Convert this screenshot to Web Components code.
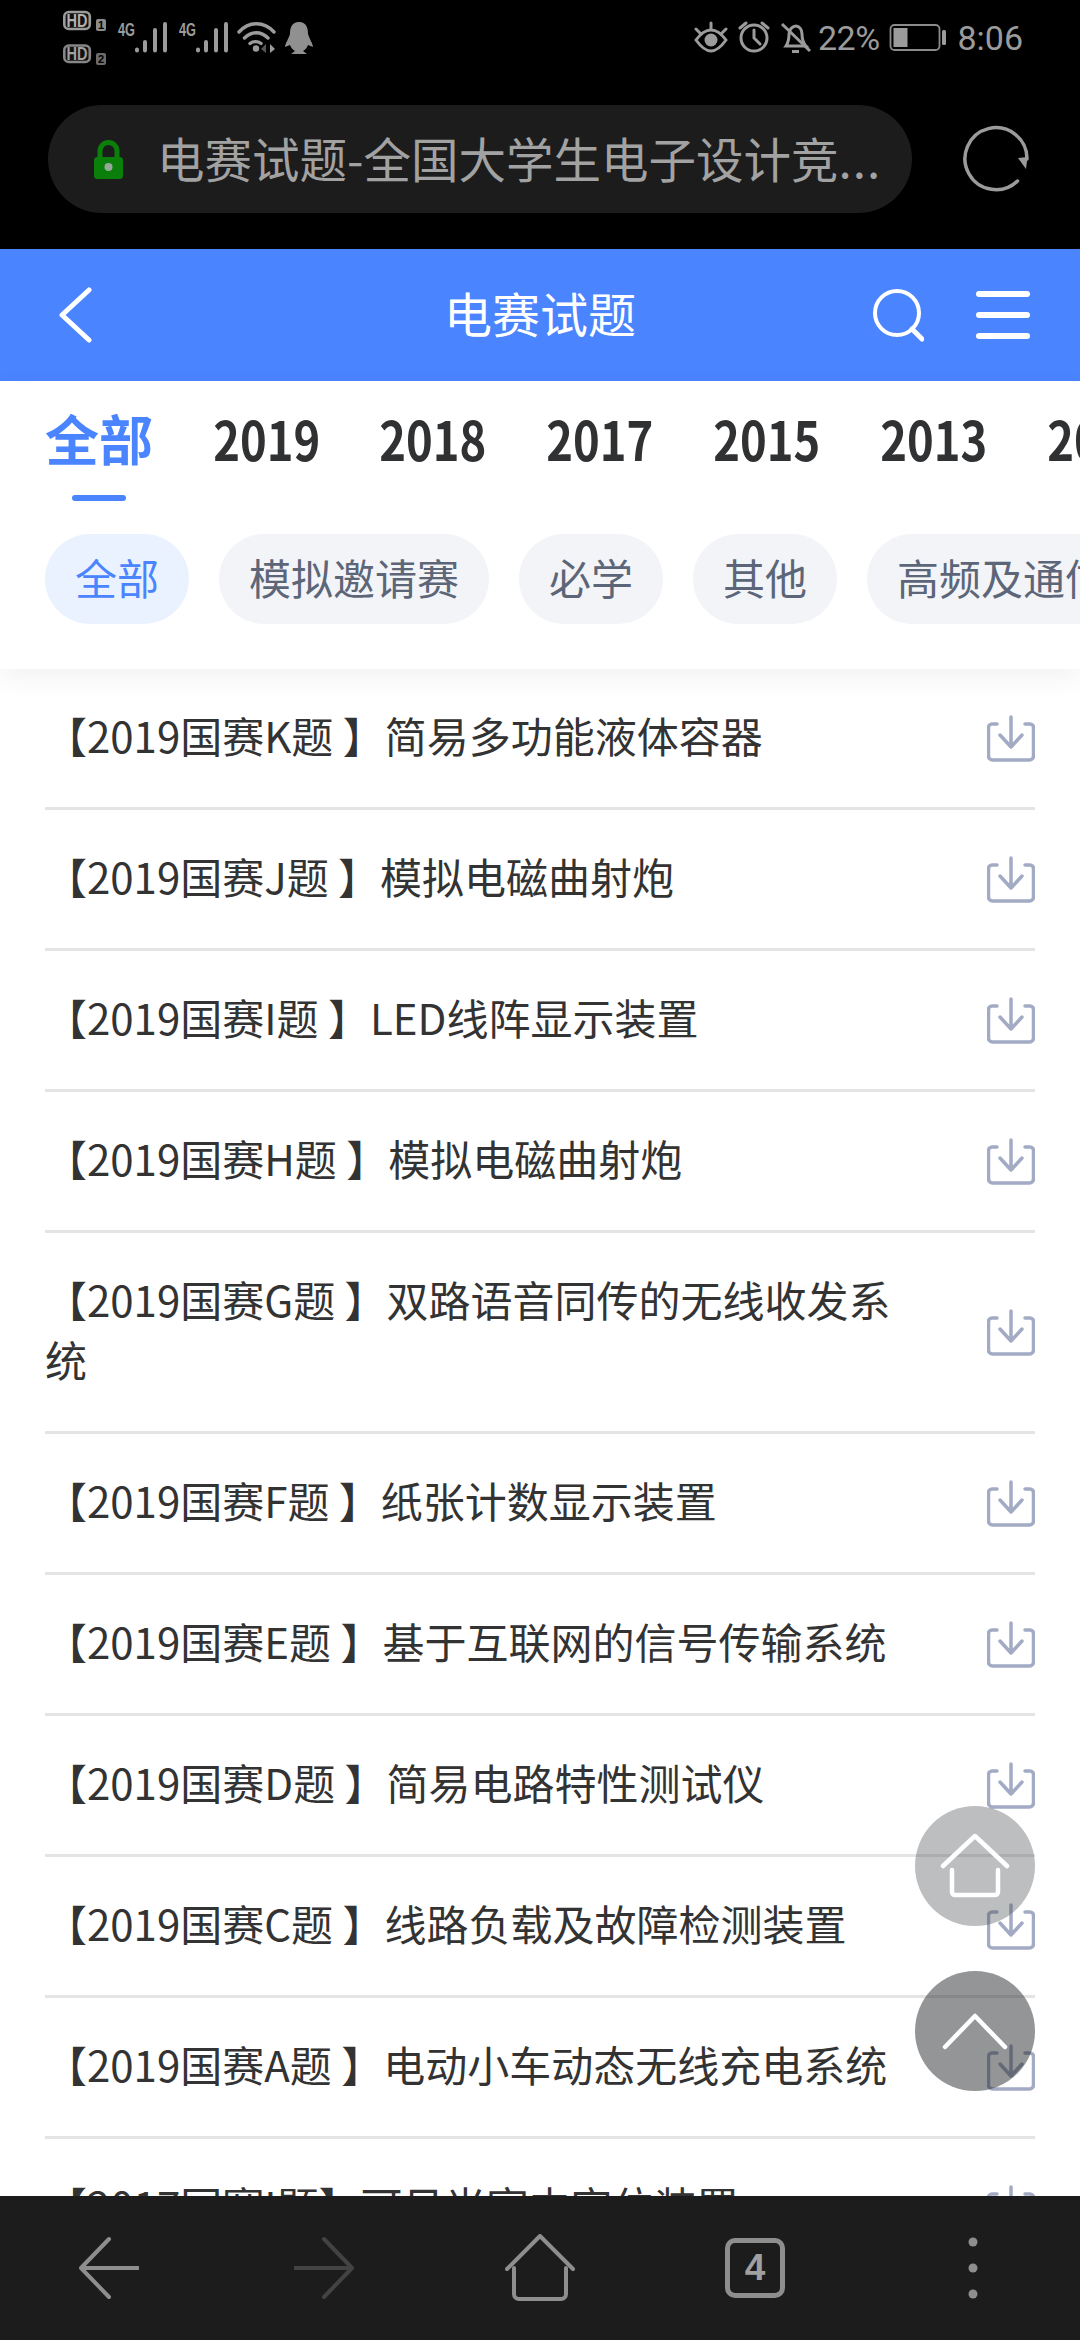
<!DOCTYPE html>
<html lang="zh-CN"><head><meta charset="utf-8"><title>电赛试题</title>
<style>
html,body{margin:0;padding:0;background:#fff}
body{width:1080px;height:2340px;overflow:hidden;font-family:"Noto Sans CJK SC","Noto Sans",sans-serif}
</style></head><body>
<x-app>
  <x-browser-top slot="top"></x-browser-top>
  <x-page-header slot="top" title="电赛试题"></x-page-header>
  <x-filter-panel slot="top"></x-filter-panel>
  <x-doc-row>【2019国赛K题 】简易多功能液体容器</x-doc-row>
  <x-doc-row>【2019国赛J题 】模拟电磁曲射炮</x-doc-row>
  <x-doc-row>【2019国赛I题 】LED线阵显示装置</x-doc-row>
  <x-doc-row>【2019国赛H题 】模拟电磁曲射炮</x-doc-row>
  <x-doc-row>【2019国赛G题 】双路语音同传的无线收发系统</x-doc-row>
  <x-doc-row>【2019国赛F题 】纸张计数显示装置</x-doc-row>
  <x-doc-row>【2019国赛E题 】基于互联网的信号传输系统</x-doc-row>
  <x-doc-row>【2019国赛D题 】简易电路特性测试仪</x-doc-row>
  <x-doc-row>【2019国赛C题 】线路负载及故障检测装置</x-doc-row>
  <x-doc-row>【2019国赛A题 】电动小车动态无线充电系统</x-doc-row>
  <x-doc-row>【2017国赛I题】可见光室内定位装置</x-doc-row>
  <x-float-btn slot="float" kind="home"></x-float-btn>
  <x-float-btn slot="float" kind="up"></x-float-btn>
  <x-bottom-nav slot="bottom"></x-bottom-nav>
</x-app>
<script>
const def=(name,html)=>customElements.define(name,class extends HTMLElement{
  constructor(){super();this.attachShadow({mode:"open"})}
  connectedCallback(){this.shadowRoot.innerHTML=typeof html==="function"?html(this):html}
});
const G="#9b9b9b";
def("x-app",`<style>
:host{display:flex;flex-direction:column;width:1080px;height:2340px;position:relative;overflow:hidden;background:#fff}
.top{display:block;position:relative;z-index:2}
.list{flex:1;min-height:0;overflow:hidden;display:block}
.bottom{display:block;position:relative;z-index:3}
.float{position:absolute;right:45px;top:1806px;z-index:2;display:flex;flex-direction:column;gap:45px}
</style>
<div class="top"><slot name="top"></slot></div>
<div class="list"><slot></slot></div>
<div class="float"><slot name="float"></slot></div>
<div class="bottom"><slot name="bottom"></slot></div>`);

def("x-browser-top",`<style>
:host{display:block;background:#000;height:249px;color:${G};font-family:Roboto,"Noto Sans",sans-serif}
.status{height:66px;display:flex;justify-content:space-between;align-items:flex-start;padding:0 57px 0 63px;box-sizing:border-box}
svg{display:block;flex:none}
.right{display:flex;align-items:center;height:75px;font-size:34px;font-weight:400}
.pct{margin-left:6px;letter-spacing:-.6px}
.time{margin-left:8px}
.url{display:flex;align-items:center;margin-top:39px}
.pill{width:864px;height:108px;border-radius:54px;background:#1c1c1c;margin-left:48px;display:flex;align-items:center;box-sizing:border-box;padding-left:46px}
.t{margin-left:34px;font:400 47.5px/60px "Noto Sans CJK SC",sans-serif;color:#a2a2a2;white-space:nowrap;position:relative;top:-1px}
.d{letter-spacing:1px}
.refresh{margin-left:49px}
</style>
<div class="status">
<svg width="252" height="66" viewBox="63 0 252 66" fill="none" stroke="${G}">
 <g font-family="Liberation Sans" font-weight="700">
 <rect x="64.300" y="12" width="25.500" height="17" rx="4.500" fill="#111" stroke-width="2.600"/>
 <text x="66.500" y="26.800" font-size="17.500" fill="#b0b0b0" stroke="none" textLength="21" lengthAdjust="spacingAndGlyphs">HD</text>
 <rect x="96" y="19" width="10" height="12" rx="2" fill="#8c8c8c" stroke="none"/>
 <text x="98" y="29" font-size="11" fill="#000" stroke="none">1</text>
 <rect x="64.300" y="45.500" width="25.500" height="16.500" rx="4.500" fill="#111" stroke="#868686" stroke-width="2.600"/>
 <text x="66.500" y="60" font-size="17.500" fill="#a0a0a0" stroke="none" textLength="21" lengthAdjust="spacingAndGlyphs">HD</text>
 <rect x="96" y="53" width="10" height="12" rx="2" fill="#6c6c6c" stroke="none"/>
 <text x="98" y="63" font-size="11" fill="#000" stroke="none">2</text>
 <g fill="${G}" stroke="none" font-size="19">
  <text x="118" y="36" textLength="17" lengthAdjust="spacingAndGlyphs">4G</text>
  <text x="179" y="36" textLength="17" lengthAdjust="spacingAndGlyphs">4G</text>
 </g>
 </g>
 <g stroke="${G}" stroke-width="4" stroke-linecap="round">
  <path d="M137 49.500v1M145 42v8.500M155 30v20.500M165 24v26.500"/>
  <path d="M198 49.500v1M206 42v8.500M216 30v20.500M226 24v26.500"/>
 </g>
 <path d="M239 32c10-11 25-11 35 0M244.500 38c7-7 16.500-7 23.500 0M250 43.500c3-2.500 8-2.500 11 0" stroke-width="3.400" stroke-linecap="round"/>
 <circle cx="256" cy="48.500" r="3.200" fill="${G}" stroke="none"/>
 <path d="M270 44l5 5-5 4z" fill="${G}" stroke="none"/><path d="M266 44l-5 5 5 4z" fill="#555" stroke="none"/>
 <path d="M299 22C291 22 290 29 290 34C289 38 285 44 285 47L290 45C291 48 293 50 295 51L291 54H307L303 51C305 50 307 48 308 45L313 47C313 44 309 38 308 34C308 29 307 22 299 22Z" fill="#909090" stroke="none"/>
</svg>
<div class="right">
<svg width="118" height="40" viewBox="695 18 118 40" fill="none" stroke="${G}" stroke-width="3">
 <path d="M697 40c5-7 11-10 15-10s10 3 15 10c-5 7-11 11-15 11s-10-4-15-11z"/><circle cx="712" cy="40" r="6.500" fill="${G}" stroke="none"/>
 <path d="M697 29l5 5M712 23v6M727 29l-5 5" stroke-linecap="round"/>
 <circle cx="755" cy="38" r="13"/><path d="M755 30v8l6 6" stroke-linecap="round"/><path d="M741 28l6-5M769 28l-6-5" stroke-linecap="round"/>
 <path d="M787 46h20c-3-3-4-6-4-12 0-5-3-8-6-8s-7 3-7 8c0 6-1 9-3 12z" /><path d="M783 24l28 27" /><path d="M793 50h7v3h-7z" fill="${G}" stroke="none"/>
</svg>
<span class="pct">22%</span>
<svg style="margin-left:10px" width="60" height="30" viewBox="0 0 60 30"><rect x="1.500" y="2" width="49" height="25" rx="4" fill="none" stroke="#8a8a8a" stroke-width="1.800"/><rect x="4.500" y="5" width="14" height="19" fill="${G}"/><rect x="53" y="7" width="4" height="15" rx="1.500" fill="${G}"/></svg>
<span class="time">8:06</span>
</div></div>
<div class="url">
<div class="pill">
<svg width="29" height="40" viewBox="0 0 29 40"><path d="M6 20v-8a8.500 8.500 0 0 1 17 0v8" fill="none" stroke="#0a7f0a" stroke-width="5"/><rect x="0" y="18" width="29" height="22" rx="3.500" fill="#0a7f0a"/><circle cx="14.500" cy="28" r="4" fill="#98a898"/></svg>
<span class="t">电赛试题-全国大学生电子设计竞<span class="d">...</span></span>
</div>
<svg class="refresh" width="70" height="70" viewBox="0 0 70 70" fill="none"><path d="M56.500 57A31 31 0 1 1 66 35" stroke="${G}" stroke-width="3.500" stroke-linecap="round"/><path d="M57 34l9.500 -1 -1.500 12z" fill="${G}"/></svg>
</div>`);

def("x-page-header",h=>`<style>
:host{display:flex;height:132px;background:#4a84ff;align-items:center;justify-content:space-between;padding:0 50px 0 59px;color:#fff;position:relative}
.title{position:absolute;left:0;right:0;top:0;text-align:center;font:400 48px/126px "Noto Sans CJK SC",sans-serif;pointer-events:none}
.r{display:flex;align-items:center;gap:52px}
svg{display:block}
</style>
<svg width="34" height="56" viewBox="0 0 34 56" fill="none" stroke="#fff" stroke-width="5" stroke-linecap="round" stroke-linejoin="round"><path d="M30 3L3 28l27 25"/></svg>
<span class="title">${h.getAttribute("title")}</span>
<div class="r">
<svg width="52" height="54" viewBox="0 0 52 54" fill="none" stroke="#fff" stroke-width="4" stroke-linecap="round"><circle cx="25" cy="25" r="22"/><path d="M40 41l10 10" stroke-width="5"/></svg>
<svg width="54" height="48" viewBox="0 0 54 48" fill="#fff"><rect y="0" width="54" height="6" rx="3"/><rect y="21" width="54" height="6" rx="3"/><rect y="42" width="54" height="6" rx="3"/></svg>
</div>`);

def("x-filter-panel",`<style>
:host{display:block;background:#fff;box-shadow:0 8px 26px rgba(0,0,0,.06);height:288px;box-sizing:border-box;overflow:hidden;font-family:"Noto Sans CJK SC",sans-serif;position:relative}
.tabs{display:flex;gap:60px;padding-left:45px;white-space:nowrap;height:120px}
.tab{display:flex;flex-direction:column;align-items:center;flex:none;width:106.800px;padding-top:27px;font:700 54px/60px "Noto Sans CJK SC",sans-serif;color:#303133}
.tab b{display:block;font-weight:700;transform:scaleX(.84)}
.tab.on{width:108px;color:#4a84ff}
.tab.on::after{content:"";display:block;width:54px;height:6px;border-radius:3px;background:#4a84ff;margin-top:27px}
.chips{display:flex;gap:30px;padding-left:45px;margin-top:33px;white-space:nowrap}
.chip{flex:none;height:90px;line-height:86px;padding:0 30px;border-radius:45px;font-size:42px;background:#f2f4f7;color:#5c6678}
.chip.on{background:#ebf2ff;color:#4a84ff}
</style>
<div class="tabs"><span class="tab on">全部</span><span class="tab"><b>2019</b></span><span class="tab"><b>2018</b></span><span class="tab"><b>2017</b></span><span class="tab"><b>2015</b></span><span class="tab"><b>2013</b></span><span class="tab"><b>2011</b></span></div>
<div class="chips"><span class="chip on">全部</span><span class="chip">模拟邀请赛</span><span class="chip">必学</span><span class="chip">其他</span><span class="chip">高频及通信</span></div>`);

def("x-doc-row",`<style>
:host{display:flex;align-items:center;justify-content:space-between;margin:0 45px;padding:36px 0;border-bottom:3px solid #e4e4e4;font:400 42px/60px "Noto Sans CJK SC",sans-serif;color:#333}
.t{width:870px;margin-bottom:6px}
svg{display:block;flex:none}
</style><div class="t"><slot></slot></div>
<svg width="48" height="47" viewBox="0 0 48 47" fill="none" stroke="#a3abc4" stroke-width="3.500" stroke-linecap="round" stroke-linejoin="round"><path d="M10 9H5a3.500 3.500 0 0 0-3.500 3.500V41A4 4 0 0 0 5.500 45h37a4 4 0 0 0 4-4V12.500A3.500 3.500 0 0 0 43 9h-5"/><path d="M24 2v30M13 20l11 12 11-12"/></svg>`);

def("x-float-btn",h=>{const home=h.getAttribute("kind")==="home";return `<style>
:host{display:flex;width:120px;height:120px;border-radius:50%;align-items:center;justify-content:center;background:${home?"rgba(70,75,80,.36)":"rgba(30,33,36,.48)"}}
svg{display:block}
</style>${home?
`<svg width="70" height="66" viewBox="0 0 70 66" fill="none" stroke="#fff" stroke-width="4.500" stroke-linecap="round" stroke-linejoin="round"><path d="M3 33L35 3l32 30"/><path d="M12 37v22a3 3 0 0 0 3 3h40a3 3 0 0 0 3-3V37" /></svg>`:
`<svg width="66" height="40" viewBox="0 0 66 40" fill="none" stroke="#fff" stroke-width="4.500" stroke-linecap="round" stroke-linejoin="round"><path d="M3 36L33 5l30 31"/></svg>`}`});

def("x-bottom-nav",`<style>
:host{display:flex;height:144px;background:#1c1c1c;align-items:center;position:relative;padding-left:79px;box-sizing:border-box}
svg{display:block;flex:none}
.tab{position:relative;flex:none;width:60px;height:60px;box-sizing:border-box;border:5px solid #8e8e8e;border-radius:10px;margin-left:150px;display:flex;align-items:center;justify-content:center;font:700 37px/40px "Liberation Sans",sans-serif;color:#a0a0a0}
.dots{margin-left:183px}
</style>
<svg width="60" height="64" viewBox="0 0 60 64" fill="none" stroke="#8e8e8e" stroke-width="4" stroke-linecap="round" stroke-linejoin="round"><path d="M30 3L2 32l28 29M2 32h57"/></svg>
<svg style="margin-left:155px" width="60" height="64" viewBox="0 0 60 64" fill="none" stroke="#434343" stroke-width="4" stroke-linecap="round" stroke-linejoin="round"><path d="M30 3l28 29-28 29M58 32H1"/></svg>
<svg style="margin-left:151px" width="70" height="68" viewBox="0 0 70 68" fill="none" stroke="#8e8e8e" stroke-width="4" stroke-linecap="round" stroke-linejoin="round"><path d="M2 35L35 2l33 33"/><path d="M9 34v26a5 5 0 0 0 5 5h42a5 5 0 0 0 5-5V34"/></svg>
<span class="tab">4</span>
<svg class="dots" width="10" height="62" viewBox="0 0 10 62" fill="#8e8e8e"><circle cx="5" cy="5" r="4.500"/><circle cx="5" cy="31" r="4.500"/><circle cx="5" cy="57" r="4.500"/></svg>`);
</script>
</body></html>
